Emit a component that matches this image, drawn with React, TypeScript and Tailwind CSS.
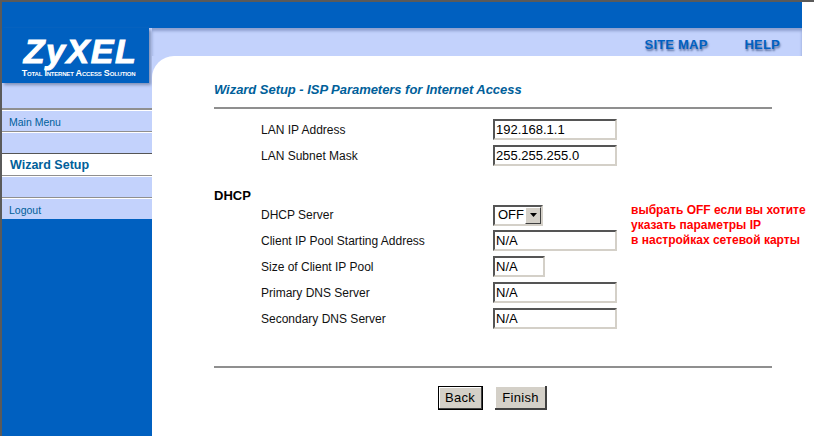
import React from 'react';

const arial = "font-['Liberation_Sans',Arial,sans-serif]";

const TextBox = ({ value, width = 'w-[124px]' }: { value: string; width?: string }) => (
  <input
    readOnly
    value={value}
    className={`${width} h-[21px] border-2 border-t-[#555] border-l-[#555] border-r-[#d4d0c8] border-b-[#d4d0c8] bg-white pl-px text-[13px] text-black outline-none`}
  />
);

const FieldRow = ({ label, children }: { label: string; children: React.ReactNode }) => (
  <div className="flex h-[26px] items-center">
    <div className="w-[279px] pt-[2px] pl-[47px] text-[12px] text-[#111]">{label}</div>
    {children}
  </div>
);

const MenuRow = ({ label, active, first }: { label?: string; active?: boolean; first?: boolean }) => (
  <div
    className={`flex items-center pl-[7px] shadow-[inset_0_1px_0_#fff] ${
      first ? 'h-[23px] border-t-2 border-[#8f8f8f]' : 'h-[22px] border-t border-[#8f8f8f]'
    } ${active ? 'border-[#555] bg-white pt-[2px] pl-[8px] text-[12.5px] font-bold' : 'bg-[#c3d2fc] pt-[4px] text-[10.5px]'} text-[#00609a]`}
  >
    {label}
  </div>
);

export default function App() {
  return (
    <div className={`${arial} flex h-[436px] w-[814px] overflow-hidden border-t-2 border-[#5a5a5a] bg-white`}>
      {/* left rail */}
      <div className="flex w-[152px] shrink-0 flex-col border-l-2 border-[#5a5a5a] bg-[#0060c0]">
        <div className="h-[26px]" />
        <div className="h-[80px] bg-[#c3d2fc]">
          <div className="flex h-[55px] w-[147px] flex-col items-center bg-[#0060c0] pt-[8px] text-white shadow-[2px_2px_3px_#7f8fb5]">
            <div className="h-[31px] pl-[10px] text-[34px] leading-[31px] font-bold tracking-[1.5px] italic [-webkit-text-stroke:1px_white]">
              ZyXEL
            </div>
            <div className="mt-[1px] pl-[6px] text-[9px] leading-[10px] font-bold tracking-[-0.2px] whitespace-nowrap [font-variant:small-caps]">
              Total Internet Access Solution
            </div>
          </div>
        </div>
        <MenuRow label="Main Menu" first />
        <MenuRow />
        <MenuRow label="Wizard Setup" active />
        <MenuRow />
        <MenuRow label="Logout" />
      </div>

      {/* main area */}
      <div className="flex w-[650px] shrink-0 flex-col bg-[#0060c0]">
        <div className="h-[26px] shrink-0" />
        <div className="flex h-[28px] shrink-0 items-center justify-end gap-[37px] bg-[#c3d2fc] pt-[5px] pr-[22px] text-[13px] font-bold tracking-[0.2px] text-[#0060c0] shadow-[inset_0_3px_3px_#8ea0cf] [text-shadow:1px_2px_2px_#5b6f9f]">
          <span>SITE MAP</span>
          <span>HELP</span>
        </div>
        <div className="flex-1 bg-[#c3d2fc]">
          <div className="h-full rounded-tl-[22px] bg-white pt-[25px] pr-[30px] pl-[62px]">
            <h1 className="h-[28px] border-b-2 border-[#8f8f8f] text-[13px] leading-[18px] font-bold tracking-[-0.04px] text-[#00609a] italic">
              Wizard Setup - ISP Parameters for Internet Access
            </h1>
            <div className="mt-[7px]">
              <FieldRow label="LAN IP Address">
                <TextBox value="192.168.1.1" />
              </FieldRow>
              <FieldRow label="LAN Subnet Mask">
                <TextBox value="255.255.255.0" />
              </FieldRow>
            </div>
            <h2 className="mt-[19px] h-[14px] text-[13px] leading-[18px] font-bold text-black">DHCP</h2>
            <div className="flex">
              <div className="w-[417px] shrink-0">
                <FieldRow label="DHCP Server">
                  <div className="mt-[2px] flex h-[21px] w-[50px] items-center border-2 border-t-[#555] border-l-[#555] border-r-[#d4d0c8] border-b-[#d4d0c8] bg-white pl-[3px] text-[13px] text-black">
                    <span className="flex-1">OFF</span>
                    <span className="flex h-[17px] w-[16px] items-center justify-center border border-t-white border-l-white border-r-[#404040] border-b-[#404040] bg-[#d4d0c8]">
                      <svg width="7" height="4" viewBox="0 0 7 4">
                        <path d="M0 0h7L3.5 4z" fill="#000" />
                      </svg>
                    </span>
                  </div>
                </FieldRow>
                <FieldRow label="Client IP Pool Starting Address">
                  <TextBox value="N/A" />
                </FieldRow>
                <FieldRow label="Size of Client IP Pool">
                  <TextBox value="N/A" width="w-[52px]" />
                </FieldRow>
                <FieldRow label="Primary DNS Server">
                  <TextBox value="N/A" />
                </FieldRow>
                <FieldRow label="Secondary DNS Server">
                  <TextBox value="N/A" />
                </FieldRow>
              </div>
              <p className="mt-[2px] text-[12px] leading-[15px] font-bold whitespace-nowrap text-[#ff0000]">
                выбрать OFF если вы хотите
                <br />
                указать параметры IP
                <br />
                в настройках сетевой карты
              </p>
            </div>
            <div className="mt-[35px] border-t-2 border-[#8f8f8f]" />
            <div className="mt-[18px] flex justify-center gap-[12px] pr-[2px]">
              <button className="h-[24px] w-[45px] border border-black bg-[#d4d0c8] text-[13px] tracking-[0.3px] text-black shadow-[inset_-1px_-1px_0_#404040,inset_1px_1px_0_#fff]">
                Back
              </button>
              <button className="h-[24px] w-[52px] bg-[#d4d0c8] text-[13px] tracking-[0.3px] text-black shadow-[inset_-2px_-2px_0_#404040,inset_1px_1px_0_#fff]">
                Finish
              </button>
            </div>
          </div>
        </div>
      </div>
    </div>
  );
}
